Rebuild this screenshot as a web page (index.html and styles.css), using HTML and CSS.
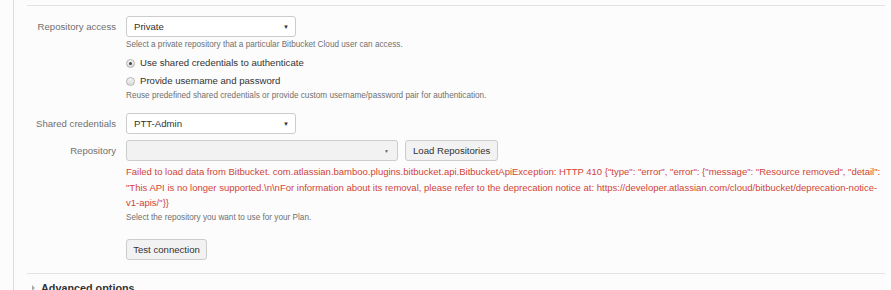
FILE: index.html
```html
<!DOCTYPE html>
<html lang="en">
<head>
    <meta charset="UTF-8">
    <title>Repository settings</title>
    <link rel="stylesheet" href="styles.css">
</head>
<body>
    <div class="panel">
        <form class="repo-form">
            <div class="field-group first">
                <label class="field-label">Repository access</label>
                <div class="field-body">
                    <div class="select narrow"><span>Private</span><span class="arrow">&#9660;</span></div>
                    <div class="description">Select a private repository that a particular Bitbucket Cloud user can access.</div>
                    <div class="radio-row first-radio"><span class="radio checked"></span>Use shared credentials to authenticate</div>
                    <div class="radio-row"><span class="radio"></span>Provide username and password</div>
                    <div class="description tight">Reuse predefined shared credentials or provide custom username/password pair for authentication.</div>
                </div>
            </div>

            <div class="field-group credentials">
                <label class="field-label">Shared credentials</label>
                <div class="field-body">
                    <div class="select narrow"><span>PTT-Admin</span><span class="arrow">&#9660;</span></div>
                </div>
            </div>

            <div class="field-group repo">
                <label class="field-label">Repository</label>
                <div class="field-body">
                    <div class="inline">
                        <div class="select wide disabled"><span></span><span class="arrow small">&#9660;</span></div>
                        <button type="button" class="button">Load Repositories</button>
                    </div>
                    <div class="error">Failed to load data from Bitbucket. com.atlassian.bamboo.plugins.bitbucket.api.BitbucketApiException: HTTP 410 {"type": "error", "error": {"message": "Resource removed", "detail": "This API is no longer supported.\n\nFor information about its removal, please refer to the deprecation notice at: https://developer.atlassian.com/cloud/bitbucket/deprecation-notice-v1-apis/"}}</div>
                    <div class="description after-error">Select the repository you want to use for your Plan.</div>
                    <button type="button" class="button test">Test connection</button>
                </div>
            </div>
        </form>

        <div class="advanced"><span class="twisty"></span>Advanced options</div>
    </div>
</body>
</html>
```

FILE: styles.css
```css
* {
    margin: 0;
    padding: 0;
    box-sizing: border-box;
}

body {
    background-color: #fcfcfc;
    font-family: "Liberation Sans", Arial, sans-serif;
    color: #333;
    font-size: 9.6px;
    overflow: hidden;
}

.panel {
    margin-left: 13px;
    border-left: 1px solid #dcdcdc;
    padding: 5px 6px 0 13px;
    height: 290px;
}

.repo-form {
    border-top: 1px solid #e3e3e3;
    border-bottom: 1px solid #e3e3e3;
    padding: 10px 0 13px;
}

.field-group {
    display: grid;
    grid-template-columns: 89px 1fr;
    column-gap: 10px;
}

.field-group.credentials {
    margin-top: 11px;
}

.field-group.repo {
    margin-top: 6px;
}

.field-label {
    text-align: right;
    color: #707070;
    font-size: 9.6px;
    line-height: 21px;
}

.field-body {
    display: flex;
    flex-direction: column;
    align-items: flex-start;
}

.select {
    height: 21px;
    border: 1px solid #ccc;
    border-radius: 3px;
    background-color: #fff;
    display: flex;
    align-items: center;
    justify-content: space-between;
    padding: 0 6px 0 7px;
    font-size: 9.6px;
    color: #333;
}

.select.narrow {
    width: 170px;
}

.select.wide {
    width: 272px;
}

.select.disabled {
    background-color: #f2f2f2;
}

.arrow {
    font-size: 6px;
    color: #333;
}

.arrow.small {
    color: #666;
    font-size: 5px;
    margin-right: 2px;
}

.description {
    font-size: 8.2px;
    color: #707070;
    margin-top: 2px;
    line-height: 12px;
}

.description.tight {
    margin-top: 0;
}

.description.after-error {
    margin-top: 1px;
}

.radio-row {
    display: flex;
    align-items: center;
    font-size: 9.6px;
    line-height: 18px;
}

.radio-row.first-radio {
    margin-top: 3px;
}

.radio {
    width: 9px;
    height: 9px;
    border-radius: 50%;
    border: 1px solid #b4b4b4;
    background: linear-gradient(#f4f4f4, #dcdcdc);
    margin-right: 5px;
    display: flex;
    align-items: center;
    justify-content: center;
}

.radio.checked::after {
    content: "";
    width: 3px;
    height: 3px;
    border-radius: 50%;
    background-color: #444;
}

.inline {
    display: flex;
    gap: 7px;
}

.button {
    font-family: "Liberation Sans", Arial, sans-serif;
    font-size: 9.6px;
    color: #333;
    height: 21px;
    padding: 0 7px;
    background-color: #f2f2f2;
    border: 1px solid #ccc;
    border-radius: 3px;
}

.error {
    color: #d04437;
    font-size: 9.5px;
    line-height: 15.5px;
    margin-top: 3px;
    max-width: 760px;
}

.button.test {
    margin-top: 15px;
    width: 81px;
    padding: 0;
}

.advanced {
    font-weight: bold;
    font-size: 10.8px;
    color: #333;
    margin-top: 8px;
    padding-left: 5px;
    display: flex;
    align-items: center;
}

.twisty {
    width: 0;
    height: 0;
    border-top: 3px solid transparent;
    border-bottom: 3px solid transparent;
    border-left: 3px solid #aaa;
    margin-right: 6px;
}
```
